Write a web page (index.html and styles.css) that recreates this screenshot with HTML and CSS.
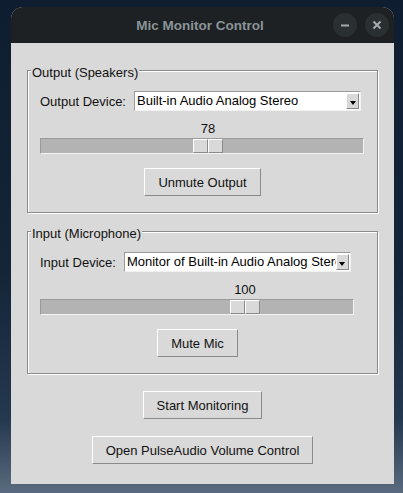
FILE: index.html
```html
<!DOCTYPE html>
<html>
<head>
<meta charset="utf-8">
<title>Mic Monitor Control</title>
<link rel="stylesheet" href="styles.css">
</head>
<body>
<div class="window">
  <div class="titlebar">
    <div class="title">Mic Monitor Control</div>
    <div class="wm-buttons">
      <span class="wm-btn"><svg width="10" height="10" viewBox="0 0 10 10"><path d="M1 5.5h8" stroke="#a3acaf" stroke-width="2"/></svg></span>
      <span class="wm-btn"><svg width="10" height="10" viewBox="0 0 10 10"><path d="M1.5 1.5l7 7M8.5 1.5l-7 7" stroke="#a3acaf" stroke-width="2"/></svg></span>
    </div>
  </div>
  <div class="content">
    <div class="frame">
      <span class="frame-label">Output (Speakers)</span>
      <div class="device-row">
        <span class="device-label">Output Device:</span>
        <div class="combo">
          <span class="combo-text">Built-in Audio Analog Stereo</span>
          <span class="combo-arrow"><i class="tri"></i></span>
        </div>
      </div>
      <div class="scale scale-out">
        <div class="scale-value"><span class="value" style="margin-left:153px">78</span></div>
        <div class="trough">
          <span class="handle" style="margin-left:152px"><i></i><i></i></span>
        </div>
      </div>
      <div class="btn-row"><button class="btn">Unmute Output</button></div>
    </div>
    <div class="frame frame-in">
      <span class="frame-label">Input (Microphone)</span>
      <div class="device-row">
        <span class="device-label">Input Device:</span>
        <div class="combo">
          <span class="combo-text">Monitor of Built-in Audio Analog Stereo</span>
          <span class="combo-arrow"><i class="tri"></i></span>
        </div>
      </div>
      <div class="scale scale-in">
        <div class="scale-value"><span class="value" style="margin-left:190px">100</span></div>
        <div class="trough">
          <span class="handle" style="margin-left:189px"><i></i><i></i></span>
        </div>
      </div>
      <div class="btn-row btn-row-in"><button class="btn">Mute Mic</button></div>
    </div>
    <div class="btn-row main-row"><button class="btn">Start Monitoring</button></div>
    <div class="btn-row main-row"><button class="btn">Open PulseAudio Volume Control</button></div>
  </div>
</div>
</body>
</html>
```

FILE: styles.css
```css
* { box-sizing: border-box; }

html, body {
  margin: 0;
  padding: 0;
}

body {
  width: 403px;
  height: 493px;
  overflow: hidden;
  background: linear-gradient(180deg, #0f1d30 0%, #142539 55%, #24384f 85%, #5a6b7e 100%);
  font-family: "Liberation Sans", Arial, sans-serif;
  font-size: 13px;
  color: #111;
}

.window {
  margin: 7px 0 0 11px;
  width: 383px;
  height: 477px;
  border-radius: 12px 12px 0 0;
  overflow: hidden;
  display: flex;
  flex-direction: column;
  background: #d9d9d9;
}

.titlebar {
  height: 36px;
  flex: none;
  background: #1d2123;
  display: grid;
  grid-template-columns: 1fr auto 1fr;
  align-items: center;
  padding-right: 5px;
}

.title {
  grid-column: 2;
  font-weight: bold;
  font-size: 13.5px;
  color: #8a9498;
  padding-top: 1px;
}

.wm-buttons {
  grid-column: 3;
  justify-self: end;
  display: flex;
  gap: 8px;
  margin-top: -1px;
}

.wm-btn {
  width: 24px;
  height: 24px;
  border-radius: 50%;
  background: #2a2f31;
  display: flex;
  align-items: center;
  justify-content: center;
}

.content {
  flex: 1;
  padding-top: 27px;
  display: flex;
  flex-direction: column;
}

.frame {
  position: relative;
  margin: 0 16px;
  border: 1px solid #8a8a8a;
  box-shadow: inset 1px 1px 0 #fff, 1px 1px 0 #fff;
  padding: 20px 0 16px 12px;
}

.frame-in {
  margin-top: 18px;
}

.frame-label {
  position: absolute;
  top: -6px;
  left: 3px;
  padding: 0 1px;
  background: #d9d9d9;
  line-height: 15px;
}

.device-row {
  display: flex;
  align-items: center;
  gap: 8px;
  height: 20px;
}

.combo {
  width: 227px;
  height: 20px;
  display: flex;
  background: #fff;
  border: 1px solid;
  border-color: #9a9a9a #f2f2f2 #f2f2f2 #9a9a9a;
  padding: 1px;
}

.combo-text {
  flex: 1;
  overflow: hidden;
  white-space: nowrap;
  line-height: 16px;
  padding-left: 1px;
  color: #000;
}

.combo-arrow {
  flex: none;
  width: 13px;
  background: #d9d9d9;
  border: 1px solid;
  border-color: #fff #8a8a8a #8a8a8a #fff;
  display: flex;
  justify-content: center;
  align-items: flex-end;
  padding-bottom: 3px;
}

.tri {
  display: block;
  width: 0;
  height: 0;
  border-left: 3px solid transparent;
  border-right: 3px solid transparent;
  border-top: 4px solid #000;
}

.scale {
  margin-top: 10px;
}

.scale-out { width: 324px; }
.scale-in { width: 314px; }

.scale-value {
  display: flex;
  line-height: 15px;
  height: 15px;
}

.value {
  width: 30px;
  text-align: center;
}

.trough {
  margin-top: 2px;
  height: 16px;
  background: #b3b3b3;
  border: 1px solid;
  border-color: #9a9a9a #f4f4f4 #f4f4f4 #9a9a9a;
  display: flex;
}

.handle {
  width: 30px;
  height: 14px;
  display: flex;
}

.handle i {
  flex: 1;
  background: #d9d9d9;
  border: 1px solid;
  border-color: #fff #8a8a8a #8a8a8a #fff;
}

.btn-row {
  display: flex;
  justify-content: center;
  margin-top: 14px;
  padding-right: 12px;
}

.btn-row-in {
  padding-right: 22px;
}

.main-row {
  margin-top: 17px;
  padding-right: 0;
}

.btn {
  height: 28px;
  padding: 0 13px;
  font-family: "Liberation Sans", Arial, sans-serif;
  font-size: 13px;
  color: #111;
  background: #d9d9d9;
  border: 1px solid;
  border-color: #fff #8a8a8a #8a8a8a #fff;
  border-radius: 0;
  margin: 0;
}
```
